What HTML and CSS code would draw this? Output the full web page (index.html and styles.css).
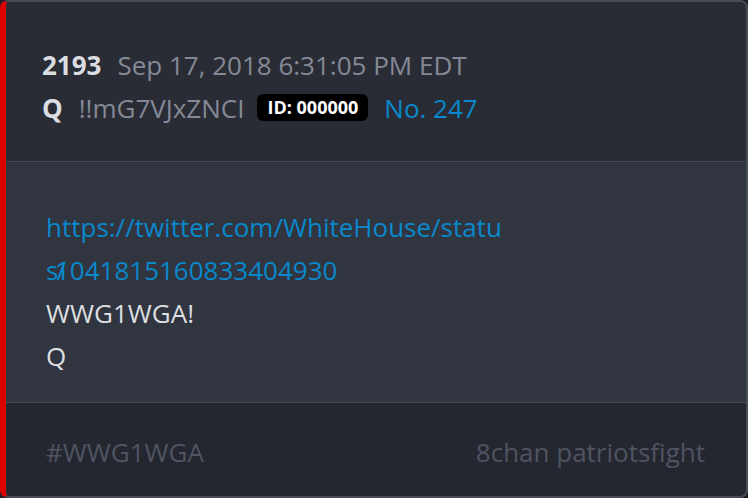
FILE: index.html
```html
<!DOCTYPE html>
<html lang="en">
<head>
    <meta charset="UTF-8">
    <meta name="viewport" content="width=device-width, initial-scale=1.0">
    <title>Q Post 2193</title>
    <link rel="stylesheet" href="styles.css">
</head>
<body>
    <div class="post">
        <div class="post-header">
            <div class="meta-line">
                <span class="post-num">2193</span>
                <span class="post-date">Sep 17, 2018 6:31:05 PM EDT</span>
            </div>
            <div class="meta-line">
                <span class="author">Q</span>
                <span class="trip">!!mG7VJxZNCI</span>
                <span class="id-badge">ID: 000000</span>
                <a class="post-no" href="#">No. 247</a>
            </div>
        </div>
        <div class="post-body">
            <a class="post-link" href="#">https://twitter.com/WhiteHouse/status<span class="slash">/</span>1041815160833404930</a>
            <p>WWG1WGA!</p>
            <p>Q</p>
        </div>
        <div class="post-footer">
            <span class="tag">#WWG1WGA</span>
            <span class="source">8chan patriotsfight</span>
        </div>
    </div>
</body>
</html>
```

FILE: styles.css
```css
body {
    margin: 0;
    background-color: #1c1e24;
    font-family: 'Open Sans', sans-serif;
}
.post {
    width: 748px;
    height: 498px;
    box-sizing: border-box;
    display: flex;
    flex-direction: column;
    border: 2px solid #474c57;
    border-left: 6px solid #dd0000;
    border-radius: 8px;
    overflow: hidden;
    background: #30353f;
}
.post-header {
    height: 160px;
    box-sizing: border-box;
    padding: 41px 36px 0;
    background: #292c35;
    border-bottom: 1px solid #434853;
}
.meta-line {
    display: flex;
    align-items: center;
    height: 43px;
    font-size: 26px;
    color: #858996;
}
.post-num {
    font-weight: bold;
    color: #dcdde0;
    margin-right: 16px;
}
.author {
    font-weight: bold;
    color: #dcdde0;
    margin-right: 16px;
}
.trip {
    margin-right: 13px;
}
.id-badge {
    background: #000;
    color: #fff;
    font-size: 18px;
    font-weight: bold;
    line-height: 27px;
    padding: 0 10px;
    border-radius: 6px;
    margin-right: 16px;
}
.post-no {
    color: #0a88cc;
    text-decoration: none;
}
.post-body {
    flex: 1;
    padding: 44px 40px 0;
    font-size: 26px;
    line-height: 43px;
    color: #dedfe2;
}
.post-link {
    display: block;
    width: 462px;
    color: #0a88cc;
    text-decoration: none;
    word-break: break-all;
}
.slash {
    margin-left: -2px;
    margin-right: -11px;
}
.post-body p {
    margin: 0;
}
.post-footer {
    height: 94px;
    box-sizing: border-box;
    display: flex;
    justify-content: space-between;
    align-items: center;
    padding: 4px 41px 0 40px;
    background: #242730;
    border-top: 1px solid #434853;
    font-size: 26px;
    color: #4f5461;
}
```
